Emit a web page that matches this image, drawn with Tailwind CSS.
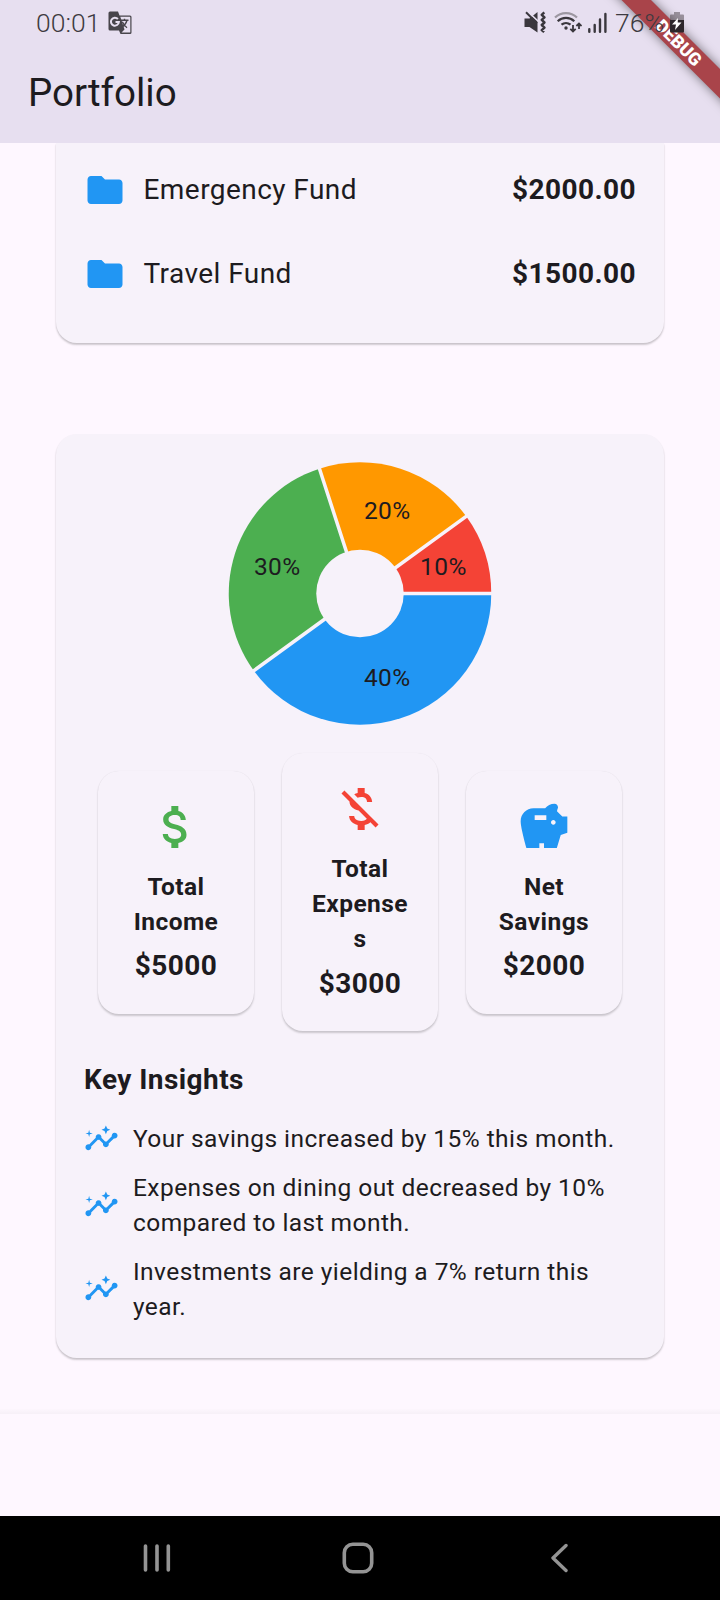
<!DOCTYPE html>
<html lang="en">
<head>
<meta charset="utf-8">
<title>Portfolio</title>
<script src="https://cdn.jsdelivr.net/npm/@tailwindcss/browser@4"></script>
</head>
<body class="bg-[#fef7ff]">
<svg class="hidden">
  <symbol id="folder" viewBox="0 0 24 24"><path d="M10 4H4c-1.1 0-1.99.9-1.99 2L2 18c0 1.1.9 2 2 2h16c1.1 0 2-.9 2-2V8c0-1.1-.9-2-2-2h-8l-2-2z"/></symbol>
  <symbol id="insights" viewBox="0 0 24 24"><path d="M21 8c-1.45 0-2.26 1.44-1.93 2.51l-3.55 3.56c-.3-.09-.74-.09-1.04 0l-2.55-2.55C12.27 10.45 11.46 9 10 9c-1.45 0-2.27 1.44-1.93 2.52l-4.56 4.55C2.44 15.74 1 16.55 1 18c0 1.1.9 2 2 2 1.45 0 2.26-1.44 1.93-2.51l4.55-4.56c.3.09.74.09 1.04 0l2.55 2.55C12.73 16.55 13.54 18 15 18c1.45 0 2.27-1.44 1.93-2.52l3.56-3.55C21.56 12.26 23 11.45 23 10c0-1.1-.9-2-2-2z"/><path d="M15 9l.94-2.07L18 6l-2.06-.93L15 3l-.92 2.07L12 6l2.08.93zM3.5 11L4 9l2-.5L4 8l-.5-2L3 8l-2 .5L3 9z"/></symbol>
</svg>
<div class="relative flex h-[1600px] w-[720px] flex-col overflow-hidden bg-[#fef7ff] font-['Roboto',sans-serif] text-[#1d1b20]">

  <!-- App bar -->
  <header class="flex h-[143px] shrink-0 flex-col bg-[#e7dff0]">
    <div class="relative z-20 flex h-[46px] items-center pl-[36px] text-[26.5px] text-[#3d3a40]">
      <span class="w-[72px] shrink-0 font-[350] leading-[46px]">00:01</span>
      <svg class="h-[24px] w-[24px] shrink-0" viewBox="0 0 24 24">
        <path fill="#48454b" d="M2 .5h8l1.500 4H22a1.500 1.500 0 0 1 1.500 1.500V21.500A1.500 1.500 0 0 1 22 23H12.500L11 19.500H2A1.500 1.500 0 0 1 .5 18V2A1.500 1.500 0 0 1 2 .5z"/>
        <path fill="#e7dff0" d="M12.300 5.800h9.400a.6.600 0 0 1 .6.600v14.600a.6.600 0 0 1-.6.600H13.500l3-3z"/>
        <path fill="none" stroke="#e7dff0" stroke-width="2" d="M9.900 8a4 4 0 1 0 1 3H7.500"/>
        <path fill="none" stroke="#48454b" stroke-width="1.400" d="M12.500 9.300h8M16.500 7.800v1.500M19 9.300c-.8 3-3 5.500-5.500 7M14.300 10.800c1 2.500 2.700 4.500 4.700 6"/>
      </svg>
      <svg class="ml-[392px] h-[24px] w-[24px] shrink-0" viewBox="0 0 24 24">
        <path fill="#3a373d" d="M.5 7.500h5l2.200-1.700L13.500 1v20.500L5.500 16h-5z"/>
        <path stroke="#e7dff0" stroke-width="1.600" d="M3.500.3L15 11"/>
        <path stroke="#3a373d" stroke-width="2" d="M2 1.200L13 12.200"/>
        <path fill="none" stroke="#3a373d" stroke-width="2.400" stroke-linejoin="round" d="M20.300 1.300l-2.600 2.500 2.800 2.600-2.800 2.500 2.800 2.600-2.800 2.500 2.800 2.600-2.800 2.500 2.400 2"/>
      </svg>
      <svg class="ml-[6px] h-[24px] w-[28px] shrink-0" viewBox="0 0 28 24" fill="none" stroke="#3a373d" stroke-width="2.200">
        <path stroke="#9c97a1" d="M1 6.500a16 16 0 0 1 22 0"/>
        <path d="M3.700 10.200a12 12 0 0 1 16.600 0M7.500 13.700a7 7 0 0 1 9 0"/>
        <circle cx="12" cy="17" r="1.700" fill="#3a373d" stroke="none"/>
        <path stroke-width="1.800" d="M19 14v6M16.300 17.800l2.700 2.700 2.700-2.700M25 18v-5.500M22.400 15l2.600-2.600L27.600 15"/>
      </svg>
      <svg class="ml-[6px] h-[24px] w-[20px] shrink-0" viewBox="0 0 20 24" fill="none" stroke="#3a373d" stroke-width="2.400" stroke-linecap="round">
        <path d="M1.300 18.300v2.500M6.700 14v6.800M12 8.500v12.300M17.400 3v17.800"/>
      </svg>
      <span class="ml-[7px] w-[55px] shrink-0 font-[350] leading-[46px]">76%</span>
      <svg class="h-[24px] w-[14px] shrink-0" viewBox="0 0 14 24">
        <path fill="#3a3036" fill-opacity=".45" d="M4 1h6v2.500h3a1 1 0 0 1 1 1V9H0V4.500a1 1 0 0 1 1-1h3z"/>
        <path fill="#2d262b" d="M0 9h14v11.500a1 1 0 0 1-1 1H1a1 1 0 0 1-1-1z"/>
        <path fill="#fff" d="M8 7l-6 6.500h4l-1 5.500 6.500-7.500H7.700z"/>
      </svg>
    </div>
    <h1 class="pl-[28px] pt-[17px] text-[38.5px] font-normal leading-[60px]">Portfolio</h1>
  </header>

  <!-- Debug ribbon -->
  <svg class="absolute right-0 top-0 z-10 h-[143px] w-[140px]" viewBox="580 0 140 143">
    <defs><filter id="soft" x="-50%" y="-50%" width="200%" height="200%"><feGaussianBlur stdDeviation="5.500"/></filter></defs>
    <path d="M601.500-20H631L740 89v29.500z" fill="#000" fill-opacity=".5" filter="url(#soft)"/>
    <path d="M601.500-20H631L740 89v29.500z" fill="#a9444a"/>
    <text x="678.800" y="49" transform="rotate(45 678.800 42.600)" text-anchor="middle" font-family="Roboto" font-weight="900" font-size="17.850" fill="#fff">DEBUG</text>
  </svg>

  <main class="flex flex-1 flex-col px-[56px]">
    <!-- Funds -->
    <section class="flex flex-col rounded-b-[21px] bg-[#f7f2fa] px-[28px] pb-[27px] pt-[5px] text-[28px] tracking-[.4375px] shadow-[0_2px_2px_rgba(0,0,0,0.17),0_1px_2px_rgba(0,0,0,0.07)]">
      <div class="flex h-[84px] items-center">
        <svg class="h-[42px] w-[42px] fill-[#2196f3]"><use href="#folder"/></svg>
        <span class="ml-[17.5px] flex-1">Emergency Fund</span><span class="font-bold">$2000.00</span>
      </div>
      <div class="flex h-[84px] items-center">
        <svg class="h-[42px] w-[42px] fill-[#2196f3]"><use href="#folder"/></svg>
        <span class="ml-[17.5px] flex-1">Travel Fund</span><span class="font-bold">$1500.00</span>
      </div>
    </section>

    <!-- Overview -->
    <section class="mt-[91px] flex flex-col rounded-[21px] bg-[#f7f2fa] p-[28px] pb-[27px] text-[24.5px] leading-[35px] tracking-[.4375px] shadow-[0_2px_2px_rgba(0,0,0,0.17),0_1px_2px_rgba(0,0,0,0.07)]">
      <svg class="h-[263px] w-[264px] self-center" viewBox="-132 -131.500 264 263">
        <path fill="#2196f3" d="M0 0L131.250 0A131.250 131.250 0 0 1-106.180 77.150z"/>
        <path fill="#4caf50" d="M0 0L-106.180 77.150A131.250 131.250 0 0 1-40.560-124.820z"/>
        <path fill="#ff9800" d="M0 0L-40.560-124.820A131.250 131.250 0 0 1 106.180-77.150z"/>
        <path fill="#f44336" d="M0 0L106.180-77.150A131.250 131.250 0 0 1 131.250 0z"/>
        <path stroke="#f7f2fa" stroke-width="3.500" d="M0 0H133M0 0L-107.600 78.200M0 0L-41.100-126.500M0 0L107.600-78.200"/>
        <circle r="43.750" fill="#f7f2fa"/>
        <g fill="#1d1b20" text-anchor="middle">
          <text x="27.300" y="-75">20%</text><text x="-82.700" y="-19">30%</text><text x="83.500" y="-19">10%</text><text x="27.300" y="92">40%</text>
        </g>
      </svg>

      <div class="mt-[28px] flex items-center gap-[28px] px-[14px] text-center font-bold">
        <div class="flex flex-1 flex-col items-center rounded-[21px] bg-[#f7f2fa] p-[28px] shadow-[0_2px_2px_rgba(0,0,0,0.18),0_0_1px_rgba(0,0,0,0.1)]">
          <svg class="h-[56px] w-[56px] fill-[#4caf50]" viewBox="0 0 24 24"><path d="M11.800 10.900c-2.270-.59-3-1.200-3-2.150 0-1.090 1.010-1.850 2.700-1.850 1.780 0 2.440.85 2.500 2.100h2.210c-.07-1.720-1.120-3.300-3.210-3.810V3h-3v2.160c-1.940.42-3.500 1.680-3.500 3.610 0 2.310 1.910 3.460 4.700 4.130 2.500.6 3 1.480 3 2.410 0 .69-.49 1.790-2.700 1.790-2.060 0-2.870-.92-2.980-2.100h-2.200c.12 2.190 1.760 3.420 3.680 3.830V21h3v-2.150c1.950-.37 3.500-1.500 3.500-3.550 0-2.840-2.430-3.810-4.700-4.400z"/></svg>
          <div class="mt-[14px]">Total<br>Income</div>
          <div class="mt-[7px] text-[28px] leading-[40px]">$5000</div>
        </div>
        <div class="flex flex-1 flex-col items-center rounded-[21px] bg-[#f7f2fa] p-[28px] pb-[27px] shadow-[0_2px_2px_rgba(0,0,0,0.18),0_0_1px_rgba(0,0,0,0.08)]">
          <svg class="h-[56px] w-[56px] fill-[#f44336]" viewBox="0 0 24 24"><path d="M12.500 6.900c1.780 0 2.440.85 2.500 2.100h2.210c-.07-1.720-1.120-3.300-3.210-3.810V3h-3v2.160c-.53.12-1.030.3-1.480.54l1.470 1.470c.41-.17.91-.27 1.510-.27zM5.330 4.060L4.060 5.330 7.500 8.770c0 2.080 1.560 3.210 3.910 3.910l3.510 3.510c-.34.48-1.050.91-2.420.91-2.060 0-2.870-.92-2.980-2.100h-2.200c.12 2.190 1.760 3.420 3.680 3.830V21h3v-2.150c.96-.18 1.820-.55 2.450-1.120l2.220 2.220 1.270-1.270L5.330 4.060z"/></svg>
          <div class="mt-[14px]">Total<br>Expense<br>s</div>
          <div class="mt-[8px] text-[28px] leading-[40px]">$3000</div>
        </div>
        <div class="flex flex-1 flex-col items-center rounded-[21px] bg-[#f7f2fa] p-[28px] shadow-[0_2px_2px_rgba(0,0,0,0.18),0_0_1px_rgba(0,0,0,0.1)]">
          <svg class="h-[56px] w-[56px] fill-[#2196f3]" viewBox="0 0 24 24"><path d="M19.830 7.500l-2.270-2.270c.07-.42.18-.81.32-1.150.08-.18.12-.37.12-.58 0-.83-.67-1.500-1.500-1.500-1.640 0-3.090.79-4 2h-5C4.460 4 2 6.460 2 9.500S4.500 21 4.500 21H10v-2h2v2h5.500l1.680-5.590 2.820-.94V7.500h-2.170zM13 9H8V7h5v2zm3 2c-.55 0-1-.45-1-1s.45-1 1-1 1 .45 1 1-.45 1-1 1z"/></svg>
          <div class="mt-[14px]">Net<br>Savings</div>
          <div class="mt-[7px] text-[28px] leading-[40px]">$2000</div>
        </div>
      </div>

      <h2 class="mb-[14px] mt-[29px] text-[28px] font-bold leading-[40px]">Key Insights</h2>
      <div class="flex items-center gap-[14px] py-[7px]">
        <svg class="h-[35px] w-[35px] shrink-0 fill-[#2196f3]"><use href="#insights"/></svg>
        <p class="whitespace-nowrap">Your savings increased by 15% this month.</p>
      </div>
      <div class="flex items-center gap-[14px] py-[7px]">
        <svg class="mb-[2px] h-[35px] w-[35px] shrink-0 fill-[#2196f3]"><use href="#insights"/></svg>
        <p class="whitespace-nowrap">Expenses on dining out decreased by 10%<br>compared to last month.</p>
      </div>
      <div class="flex items-center gap-[14px] py-[7px]">
        <svg class="mb-[2px] h-[35px] w-[35px] shrink-0 fill-[#2196f3]"><use href="#insights"/></svg>
        <p class="whitespace-nowrap">Investments are yielding a 7% return this<br>year.</p>
      </div>
    </section>
  </main>

  <!-- Bottom bar edge -->
  <div class="h-[5px] shrink-0 bg-linear-to-b from-[#fdf6fe] to-[#f6f0f7]"></div>
  <div class="h-[102px] shrink-0 bg-[#fef7ff]"></div>

  <!-- System navigation -->
  <nav class="flex h-[84px] shrink-0 items-center bg-black pl-[143px]">
    <svg class="h-[30px] w-[28px]" viewBox="0 0 28 30" fill="none" stroke="#949494" stroke-width="3.600" stroke-linecap="round"><path d="M2.500 3v24M14 3v24M25.300 3v24"/></svg>
    <svg class="ml-[171px] h-[32px] w-[32px]" viewBox="0 0 32 32" fill="none" stroke="#949494" stroke-width="3.600"><rect x="2.300" y="2.300" width="27.400" height="27.400" rx="8.500"/></svg>
    <svg class="ml-[176px] h-[30px] w-[18px]" viewBox="0 0 18 30" fill="none" stroke="#949494" stroke-width="3.400" stroke-linecap="round" stroke-linejoin="round"><path d="M16 2.500L3 15l13 12.500"/></svg>
  </nav>
</div>
</body>
</html>
